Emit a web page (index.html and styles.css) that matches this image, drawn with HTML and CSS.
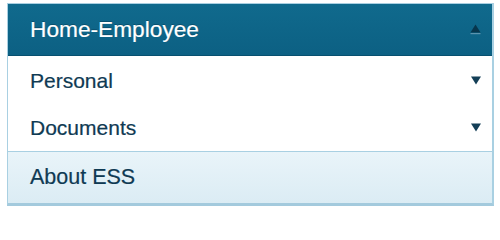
FILE: index.html
```html
<!DOCTYPE html>
<html>
<head>
<meta charset="utf-8">
<link rel="stylesheet" href="styles.css">
</head>
<body>
<nav class="menu">
  <div class="row header">
    <span class="label">Home-Employee</span>
    <svg class="tri up" width="11" height="11" viewBox="0 0 11 11"><polygon points="5.5,0.5 10.5,8.5 0.5,8.5" fill="#07364d"/><rect x="0.5" y="9" width="10" height="1.2" fill="#5a93ae"/></svg>
  </div>
  <div class="row item">
    <span class="label">Personal</span>
    <svg class="tri" width="10" height="9" viewBox="0 0 10 9"><polygon points="0,0.5 10,0.5 5,8.5" fill="#143f57"/></svg>
  </div>
  <div class="row item docs">
    <span class="label">Documents</span>
    <svg class="tri" width="10" height="9" viewBox="0 0 10 9"><polygon points="0,0.5 10,0.5 5,8.5" fill="#143f57"/></svg>
  </div>
  <div class="row about">
    <span class="label">About ESS</span>
  </div>
</nav>
</body>
</html>
```

FILE: styles.css
```css
html, body {
  margin: 0;
  padding: 0;
  background: #ffffff;
}

body {
  padding: 3px 0 0 7px;
  font-family: "Liberation Sans", Arial, sans-serif;
}

.menu {
  width: 487px;
  box-sizing: border-box;
  border-top: 1px solid #a9d0e2;
  border-left: 1px solid #a9d0e2;
  border-right: 2px solid #a9d0e2;
  border-bottom: 3px solid #a3cadd;
  display: flex;
  flex-direction: column;
}

.row {
  display: flex;
  align-items: center;
  justify-content: space-between;
  padding: 0 11px 0 22px;
}

.header {
  height: 52px;
  box-sizing: border-box;
  background: linear-gradient(#106a8d, #0c6083);
  border-bottom: 1px solid #07506f;
  color: #ffffff;
  font-size: 22.7px;
}

.header .label {
  text-shadow: 0 -1px 0 rgba(0, 40, 60, 0.35);
  -webkit-text-stroke: 0.2px #ffffff;
}

.item {
  height: 48px;
  background: #ffffff;
  color: #0f3a53;
  font-size: 21px;
}

.docs {
  height: 47px;
}

.about {
  height: 51px;
  box-sizing: content-box;
  border-top: 1px solid #a9d0e2;
  background: linear-gradient(#e9f4f9, #dbecf4);
  color: #0f3a53;
  font-size: 21.5px;
}

.item .label,
.about .label {
  -webkit-text-stroke: 0.2px #0f3a53;
}

.label {
  line-height: 1;
}

.tri {
  display: block;
}

.tri.up {
  margin-top: -1px;
}
```
